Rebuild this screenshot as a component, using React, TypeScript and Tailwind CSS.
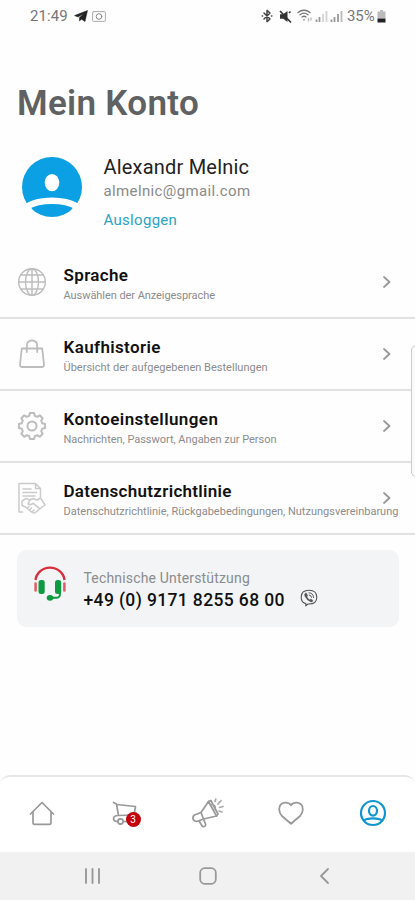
import type { ReactNode } from "react";

const icon = {
  fill: "none",
  stroke: "currentColor",
  strokeLinecap: "round" as const,
  strokeLinejoin: "round" as const,
};

function StatusBar() {
  return (
    <div className="h-8 flex items-center pl-[30px] pr-[29px] text-[#777]">
      <span className="text-[15px] leading-none tracking-[0.1px] w-[38px]">21:49</span>
      <svg className="ml-[6px]" width="14" height="12" viewBox="0 0 14 12">
        <path d="M13.5 0.5 11 11.5 7.5 9.2 5.5 11V7.6L10 3.6 4 7 0.5 5.6Z" fill="#222" stroke="#222" strokeWidth="0.5" />
      </svg>
      <svg className="ml-[4px]" width="14" height="11" viewBox="0 0 14 11" {...icon} stroke="#aaa">
        <rect x="0.6" y="0.6" width="12.8" height="9.8" rx="1" />
        <circle cx="7" cy="5.5" r="2.8" stroke="#888" />
      </svg>
      <div className="flex-1" />
      <svg width="12" height="14" viewBox="0 0 12 14" {...icon} stroke="#444" strokeWidth="1.5">
        <path d="m3 4 6 6-3 2.6V1.4L9 4l-6 6" />
        <path d="M1.2 7h.4M10.4 7h.4" />
      </svg>
      <svg className="ml-[6px]" width="13" height="13" viewBox="0 0 13 13">
        <path d="M1 4.200h3L8.500 1v11L4.300 8.700H1Z" fill="#333" />
        <path d="m1 1 11 11.500M10 3l1.500-1.500" stroke="#333" strokeWidth="1.600" />
      </svg>
      <svg className="ml-[5px]" width="16" height="14" viewBox="0 0 16 14" {...icon} stroke="#777" strokeWidth="1.3">
        <path d="M1 3.500C4.500.500 9.500.500 13 3.500M3 5.800c2.500-2 5.500-2 8 0M5 8c1.500-1 2.800-1 4 0M7 10.500v.5" />
        <path d="M11.500 9.500v2.500M14 11V9" stroke="#bbb" />
      </svg>
      <svg className="ml-[2px]" width="13" height="12" viewBox="0 0 13 12" strokeWidth="1.8">
        <path d="M1.500 9.500V12M4.500 7v5" stroke="#999" />
        <path d="M8 4v8M11.500 1v11" stroke="#d4d4d4" />
      </svg>
      <svg className="ml-[2px]" width="13" height="12" viewBox="0 0 13 12" strokeWidth="1.8">
        <path d="M1.500 9.500V12M4.500 7v5M8 4v8" stroke="#999" />
        <path d="M11.500 1v11" stroke="#bbb" />
      </svg>
      <span className="ml-[4px] w-[29px] text-[15px] leading-none tracking-[-0.1px]">35%</span>
      <svg className="ml-[1px]" width="9" height="13" viewBox="0 0 9 13">
        <path d="M3 0h3v1.500h2.500V8.500h-8V1.500H3Z" fill="#bbb" />
        <path d="M.5 8.500h8v4h-8Z" fill="#222" />
      </svg>
    </div>
  );
}

function Avatar() {
  return (
    <svg width="62" height="62" viewBox="0 0 62 62">
      <circle cx="31" cy="31" r="30" fill="#0b9fe3" />
      <ellipse cx="31" cy="26.6" rx="7.3" ry="8.7" fill="#fff" />
      <path d="M6 50.500C19 42.800 43 42.800 56 50.500" stroke="#fff" strokeWidth="6.3" fill="none" />
      <path d="M0 48 8 49 11.500 53.500 7 58ZM62 48 54 49 50.500 53.500 55 58Z" fill="#fff" />
    </svg>
  );
}

function GlobeIcon() {
  return (
    <svg width="30" height="30" viewBox="0 0 30 30" {...icon} strokeWidth="1.4">
      <circle cx="15" cy="15" r="13.3" />
      <ellipse cx="15" cy="15" rx="6.5" ry="13.3" />
      <path d="M15 1.700v26.600M1.700 15h26.600M3.800 8h22.400M3.800 22h22.400" />
    </svg>
  );
}

function BagIcon() {
  return (
    <svg width="30" height="30" viewBox="0 0 30 30" {...icon} strokeWidth="1.8">
      <path d="M4.800 9.500h20.400l1.800 16q.2 2.500-2.200 2.500H5.200Q2.800 28 3 25.500Z" />
      <path d="M9.800 13V7q0-5.500 5.200-5.500T20.200 7v6" />
    </svg>
  );
}

// eight teeth, four points each: [radius, angle offset in degrees]
const tooth = [
  [10.6, -15],
  [13.2, -9],
  [13.2, 9],
  [10.6, 15],
];

const gearPoints = Array.from({ length: 8 })
  .flatMap((_, i) =>
    tooth.map(([r, offset]) => {
      const a = ((i * 45 + offset) * Math.PI) / 180;
      return `${(15 + r * Math.cos(a)).toFixed(2)},${(15 + r * Math.sin(a)).toFixed(2)}`;
    }),
  )
  .join(" ");

function GearIcon() {
  return (
    <svg width="30" height="30" viewBox="0 0 30 30" {...icon} strokeWidth="2">
      <polygon points={gearPoints} />
      <circle cx="15" cy="15" r="4.5" />
    </svg>
  );
}

function PrivacyIcon() {
  return (
    <svg className="text-[#cbcbcb]" width="30" height="34" viewBox="0 0 30 34" {...icon} strokeWidth="1.5">
      <path d="M5.500 31H2V2.500h16.500l5 5V16M18.500 2.500v5h5M6 8h8M6 11.500h13.500M6 15h12" />
      <path d="m5 20 4-2.500 4 1.500 3-1.500 4 1.500 3.500-2 4.500 7-3.500 2.500-6 5q-2 1-4-.5l-6-5L5 24.500ZM13 19l-2 4q3 1.500 5-.8l6 5M10 27l2-1.500M12 29l2.500-2M15 31l2-2" />
    </svg>
  );
}

function HeadsetIcon() {
  return (
    <svg width="34" height="38" viewBox="0 0 34 38" fill="none">
      <path d="M2.500 16a14.600 14 0 0 1 29 0" stroke="#d92f3c" strokeWidth="2.4" />
      <path d="M2.600 19.500v7M31.400 19.500v7" stroke="#e0606a" strokeWidth="2.6" strokeLinecap="round" />
      <rect x="5.5" y="16" width="6.2" height="14" rx="2.5" fill="#0d9a41" />
      <rect x="22" y="16" width="6.2" height="14" rx="2.5" fill="#0d9a41" />
      <path d="M27 28v2q0 3.800-4 3.800H17" stroke="#0d9a41" strokeWidth="1.9" />
      <ellipse cx="17" cy="33.8" rx="3.3" ry="2.9" fill="#0d9a41" />
    </svg>
  );
}

function ViberIcon() {
  return (
    <svg width="18" height="18" viewBox="0 0 18 18" {...icon} stroke="#555" strokeWidth="1.1">
      <path d="M5.800 16.800V14.600Q1.200 13.500 1.200 8.200 1.200 1.200 9 1.200t7.800 7q0 6.800-7.800 6.800H8Z" />
      <path
        d="M5 4.500q-1 1 0 3 2 4 6 5.500 1.500 0 2-1.500l-2-1.600-1.500.8Q7.500 9.500 7 7.800l.7-1.300L6.300 4Z"
        fill="#555"
        strokeWidth="0.4"
      />
      <path d="M9 3.800q4.500.2 4.500 4.700M9.300 6q2 .2 2.200 2.300" strokeWidth="1" />
    </svg>
  );
}

function HomeIcon() {
  return (
    <svg width="26" height="26" viewBox="0 0 26 26" {...icon} strokeWidth="1.7">
      <path d="M1.500 14 13 2.500 24.500 14M4 12v10.500q0 1.800 1.500 1.800h15q1.500 0 1.500-1.800V12" />
    </svg>
  );
}

function CartIcon() {
  return (
    <svg width="26" height="26" viewBox="0 0 26 26" {...icon} strokeWidth="1.7">
      <path d="M1.500 2.500 4.500 4 6.500 15.500M4.500 4.500 23.500 6.500l-1.500 8.500L6 15.500Q1.500 15.800 1.500 18.500t3.500 3H22" />
      <circle cx="8.5" cy="21.5" r="2.6" fill="#fff" />
    </svg>
  );
}

function MegaphoneIcon() {
  return (
    <svg width="34" height="32" viewBox="0 0 34 32" {...icon} strokeWidth="1.7">
      <path d="M17.500 4.500 10 15.500 3.500 18q-2.500 2-1.200 4.500Q4 25 6.500 24.300L12.500 22 25.500 19Z" />
      <path d="m17.500 4.500 2.300-1 7.200 13.500-1.500 2M10 15.500l2.500 6.500M8 24l3.500 5.500q3 .5 3.200-2L12.500 22M21 7.500q4 .5 3.200 5.500" />
      <path d="m24 4.500.8-2.500M27 7l3-3.300M28.500 10.500l3.500-1M28 14l3 1" stroke="#aaa" />
    </svg>
  );
}

function HeartIcon() {
  return (
    <svg width="26" height="26" viewBox="0 0 26 26" {...icon} strokeWidth="1.8">
      <path d="M13 23.800 4.200 16.300Q1.200 13 1.200 9.500q0-6.300 6-6.800Q11 2.500 13 5.200 15 2.500 18.800 2.700q6 .5 6 6.800 0 3.500-3 6.800Z" />
    </svg>
  );
}

function ProfileIcon() {
  return (
    <svg width="28" height="28" viewBox="0 0 28 28" {...icon} strokeWidth="2.2">
      <circle cx="14" cy="14" r="12" />
      <ellipse cx="14" cy="11.8" rx="4" ry="4.8" />
      <path d="M5 21.500Q7 19.300 14 19.300t9 2.200" />
    </svg>
  );
}

type Row = { title: string; text: string; titleClass: string; textClass: string; icon: ReactNode };

const rows: Row[] = [
  {
    title: "Sprache",
    text: "Auswählen der Anzeigesprache",
    titleClass: "tracking-[0.35px]",
    textClass: "tracking-[-0.06px]",
    icon: <GlobeIcon />,
  },
  {
    title: "Kaufhistorie",
    text: "Übersicht der aufgegebenen Bestellungen",
    titleClass: "tracking-[0.36px]",
    textClass: "tracking-[0.01px]",
    icon: <BagIcon />,
  },
  {
    title: "Kontoeinstellungen",
    text: "Nachrichten, Passwort, Angaben zur Person",
    titleClass: "tracking-[0.4px]",
    textClass: "tracking-[-0.03px]",
    icon: <GearIcon />,
  },
  {
    title: "Datenschutzrichtlinie",
    text: "Datenschutzrichtlinie, Rückgabebedingungen, Nutzungsvereinbarung",
    titleClass: "tracking-[0.3px]",
    textClass: "tracking-[0px]",
    icon: <PrivacyIcon />,
  },
];

function MenuRow({ row }: { row: Row }) {
  return (
    <div className="h-[72px] border-b-2 border-[#e2e2e2] flex">
      <div className="w-[63.5px] shrink-0 pl-[17px] flex items-center text-[#bdbdbd]">{row.icon}</div>
      <div className="w-[310.5px] shrink-0 pt-[18px] whitespace-nowrap">
        <div className={`text-[17px] leading-5 font-semibold text-[#111] ${row.titleClass}`}>{row.title}</div>
        <div className={`text-[11px] leading-[14px] mt-[4px] text-[#8c8c8c] ${row.textClass}`}>{row.text}</div>
      </div>
      <svg className="mt-[28px] ml-[8px]" width="10" height="14" viewBox="0 0 10 14" {...icon} stroke="#999" strokeWidth="1.8">
        <path d="m2 2 5.500 5L2 12" />
      </svg>
    </div>
  );
}

export default function App() {
  return (
    <div className="relative w-[415px] h-[900px] overflow-hidden bg-[#fefefe] flex flex-col font-['Roboto',sans-serif]">
      <StatusBar />
      <h1 className="mt-[51px] ml-[17px] h-[42px] text-[35px] leading-[42px] font-semibold tracking-[0.3px] text-[#5f6163]">
        Mein Konto
      </h1>
      <div className="mt-[28px] h-[94px] flex">
        <div className="ml-[21px] mt-[3px]">
          <Avatar />
        </div>
        <div className="ml-[20.5px] whitespace-nowrap">
          <div className="text-[20px] leading-[28px] tracking-[0.2px] text-[#222]">Alexandr Melnic</div>
          <div className="text-[15px] leading-[20px] tracking-[0.37px] text-[#8a8a8a]">almelnic@gmail.com</div>
          <div className="text-[15px] leading-[20px] mt-[9px] tracking-[0.3px] text-[#2ba3c4]">Ausloggen</div>
        </div>
      </div>
      <div>
        {rows.map((row) => (
          <MenuRow key={row.title} row={row} />
        ))}
      </div>
      <div className="mt-[15px] ml-[17px] mr-[16px] h-[77px] rounded-[9px] bg-[#f2f4f6] flex">
        <div className="ml-[16px] mt-[14px] w-[50.5px]">
          <HeadsetIcon />
        </div>
        <div className="pt-[19px] w-[216.5px] whitespace-nowrap">
          <div className="text-[14px] leading-[18px] tracking-[0.17px] text-[#8a8c8e]">Technische Unterstützung</div>
          <div className="text-[17.5px] leading-[22px] mt-[2px] font-medium tracking-[0.37px] text-[#111]">
            +49 (0) 9171 8255 68 00
          </div>
        </div>
        <div className="mt-[39px]">
          <ViberIcon />
        </div>
      </div>
      <div className="flex-1" />
      <div className="h-[77px] border-t-2 border-[#e6e6e6] rounded-t-[10px] bg-white flex items-center pb-[3px] text-[#999]">
        <div className="w-[83px] flex justify-center">
          <HomeIcon />
        </div>
        <div className="w-[83px] flex justify-center">
          <div className="relative">
            <CartIcon />
            <span className="absolute left-[14px] top-[12px] size-[15px] rounded-full bg-[#c4000b] text-white text-[10px] leading-[15px] text-center">
              3
            </span>
          </div>
        </div>
        <div className="w-[83px] flex justify-center">
          <MegaphoneIcon />
        </div>
        <div className="w-[83px] flex justify-center">
          <HeartIcon />
        </div>
        <div className="w-[82px] flex justify-center text-[#1195cf]">
          <ProfileIcon />
        </div>
      </div>
      <div className="h-[48px] bg-[#f1f1f1] flex items-center text-[#999]">
        <svg className="ml-[84px]" width="17" height="18" viewBox="0 0 17 18" {...icon} strokeWidth="1.9">
          <path d="M2 2v14M8.500 2v14M15 2v14" />
        </svg>
        <svg className="ml-[98px]" width="18" height="18" viewBox="0 0 18 18" {...icon} strokeWidth="1.8">
          <rect x="1.2" y="1.2" width="15.6" height="15.6" rx="4.5" />
        </svg>
        <svg className="ml-[102px]" width="11" height="18" viewBox="0 0 11 18" {...icon} strokeWidth="1.8">
          <path d="M9 2 2 9l7 7" />
        </svg>
      </div>
      {/* edge panel handle */}
      <div className="absolute left-[411px] top-[345px] w-[12px] h-[132px] rounded-[5px] border border-[#ccc] bg-[#fafafa]" />
    </div>
  );
}
